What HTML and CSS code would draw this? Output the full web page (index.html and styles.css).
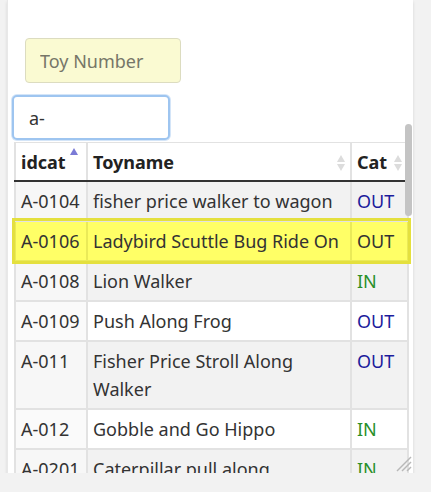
FILE: index.html
```html
<!DOCTYPE html>
<html>
<head>
<meta charset="utf-8">
<link rel="stylesheet" href="styles.css">
</head>
<body>
<div class="panel">
  <div class="field-row">
    <input class="toy-number" type="text" placeholder="Toy Number">
  </div>
  <div class="search-row">
    <input class="search" type="text" value="a-">
  </div>
  <table class="toys">
    <thead>
      <tr>
        <th class="c-id"><span class="label">idcat</span><i class="sort-up"></i></th>
        <th class="c-name"><span class="label">Toyname</span><span class="sort-both"><i class="up"></i><i class="down"></i></span></th>
        <th class="c-cat"><span class="label">Cat</span><span class="sort-both"><i class="up"></i><i class="down"></i></span></th>
      </tr>
    </thead>
    <tbody>
      <tr class="odd"><td class="c-id">A-0104</td><td>fisher price walker to wagon</td><td class="out">OUT</td></tr>
      <tr class="even hl"><td class="c-id">A-0106</td><td>Ladybird Scuttle Bug Ride On</td><td>OUT</td></tr>
      <tr class="odd"><td class="c-id">A-0108</td><td>Lion Walker</td><td class="in">IN</td></tr>
      <tr class="even"><td class="c-id">A-0109</td><td>Push Along Frog</td><td class="out">OUT</td></tr>
      <tr class="odd"><td class="c-id">A-011</td><td>Fisher Price Stroll Along Walker</td><td class="out">OUT</td></tr>
      <tr class="even"><td class="c-id">A-012</td><td>Gobble and Go Hippo</td><td class="in">IN</td></tr>
      <tr class="odd"><td class="c-id">A-0201</td><td>Caterpillar pull along</td><td class="in">IN</td></tr>
    </tbody>
  </table>
  <div class="scroll-thumb"></div>
  <svg class="grip" width="18" height="18" viewBox="0 0 18 18">
    <line x1="17" y1="3" x2="3" y2="17" stroke="#b8b8b8" stroke-width="1.5"/>
    <line x1="17" y1="8" x2="8" y2="17" stroke="#b8b8b8" stroke-width="1.5"/>
    <line x1="17" y1="13" x2="13" y2="17" stroke="#b8b8b8" stroke-width="1.5"/>
  </svg>
</div>
</body>
</html>
```

FILE: styles.css
```css
html, body {
  margin: 0;
  padding: 0;
  background: #f2f2f2;
  font-family: "Noto Sans", "Open Sans", sans-serif;
  color: #333;
}

.panel {
  position: relative;
  margin-left: 7px;
  width: 406px;
  height: 473px;
  background: #fff;
  overflow: hidden;
  box-shadow: 0 2px 3px rgba(0, 0, 0, 0.12);
  border-left: 1px solid #e8e8e8;
  box-sizing: border-box;
}

.field-row {
  padding-top: 38px;
  padding-left: 17px;
}

.toy-number {
  display: block;
  box-sizing: border-box;
  width: 156px;
  height: 45px;
  padding: 0 0 0 14px;
  background: #fafad2;
  border: 1px solid #dcdcc0;
  border-radius: 4px;
  font-family: inherit;
  font-size: 18px;
  color: #333;
  outline: none;
}

.toy-number::placeholder {
  color: #767668;
}

.search-row {
  padding-top: 12px;
  padding-left: 4px;
}

.search {
  display: block;
  box-sizing: border-box;
  width: 158px;
  height: 45px;
  padding: 0 0 0 15px;
  background: #fff;
  border: 2px solid #9ec5f0;
  border-radius: 5px;
  box-shadow: 0 0 0 1px #d4e5f8;
  font-family: inherit;
  font-size: 18px;
  color: #333;
  outline: none;
}

.toys {
  margin-top: 2px;
  margin-left: 6px;
  width: 395px;
  border-collapse: collapse;
  font-size: 18px;
  line-height: 28px;
}

.toys th,
.toys td {
  border: 2px solid #e2e2e2;
  padding: 5px 5px;
  text-align: left;
  vertical-align: top;
}

.toys th {
  position: relative;
  font-weight: bold;
  color: #222;
  border-top: 1px solid #e2e2e2;
  border-bottom: 2px solid #333;
  padding-top: 5px;
  padding-bottom: 4px;
}

.toys .c-id {
  width: 60px;
  white-space: nowrap;
}

.toys .c-cat {
  width: 45px;
}

.toys tr.odd td {
  background: #f2f2f2;
}

.toys tr.odd td.c-id {
  background: #f7f7f7;
}

.toys tr.even td {
  background: #fff;
}

.toys tr.even td.c-id {
  background: #fafafa;
}

.toys tr.hl td,
.toys tr.hl td.c-id {
  background: #ffff66;
  border-color: #eaea58;
}

.toys tr.hl {
  outline: 3px solid #e4e03e;
  outline-offset: 0;
}

.toys td.out {
  color: #1c1c9c;
}

.toys td.in {
  color: #2a8f2a;
}

.sort-up {
  position: absolute;
  top: 5px;
  right: 8px;
  width: 0;
  height: 0;
  border-left: 4px solid transparent;
  border-right: 4px solid transparent;
  border-bottom: 7px solid #7b7bd6;
}

.sort-both {
  position: absolute;
  top: 11px;
  right: 5px;
  width: 8px;
  height: 18px;
}

.sort-both i {
  position: absolute;
  left: 0;
  width: 0;
  height: 0;
  border-left: 4px solid transparent;
  border-right: 4px solid transparent;
}

.sort-both .up {
  top: 1px;
  border-bottom: 7px solid #dcdcdc;
}

.sort-both .down {
  top: 10px;
  border-top: 7px solid #dcdcdc;
}

.scroll-thumb {
  position: absolute;
  left: 397px;
  top: 124px;
  width: 7px;
  height: 92px;
  border-radius: 4px;
  background: #c4c4c4;
}

.grip {
  position: absolute;
  right: 1px;
  bottom: 1px;
}
```
